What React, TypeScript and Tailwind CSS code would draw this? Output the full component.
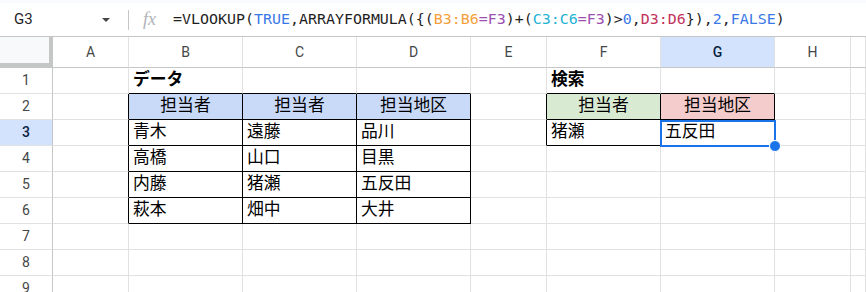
import React from 'react';

type Cell = { text: string; bold?: boolean; bg?: string; center?: boolean };

const COLS = ['A', 'B', 'C', 'D', 'E', 'F', 'G', 'H', ''];
const ROWS = [1, 2, 3, 4, 5, 6, 7, 8, 9];

const head = 'bg-[#c9daf8]';

const data: Record<string, Cell> = {
  B1: { text: 'データ', bold: true },
  B2: { text: '担当者', bg: head, center: true },
  C2: { text: '担当者', bg: head, center: true },
  D2: { text: '担当地区', bg: head, center: true },
  B3: { text: '青木' },
  C3: { text: '遠藤' },
  D3: { text: '品川' },
  B4: { text: '高橋' },
  C4: { text: '山口' },
  D4: { text: '目黒' },
  B5: { text: '内藤' },
  C5: { text: '猪瀬' },
  D5: { text: '五反田' },
  B6: { text: '萩本' },
  C6: { text: '畑中' },
  D6: { text: '大井' },
  F1: { text: '検索', bold: true },
  F2: { text: '担当者', bg: 'bg-[#d9ead3]', center: true },
  G2: { text: '担当地区', bg: 'bg-[#f4cccc]', center: true },
  F3: { text: '猪瀬' },
  G3: { text: '五反田' },
};

// black edges of the two bordered tables
const rightBlack = (c: string, r: number) =>
  (r >= 2 && r <= 6 && 'ABCD'.includes(c) && c !== '') ||
  (r >= 2 && r <= 3 && 'EFG'.includes(c) && c !== '');
const bottomBlack = (c: string, r: number) =>
  (r >= 1 && r <= 6 && 'BCD'.includes(c) && c !== '') ||
  (r >= 1 && r <= 3 && 'FG'.includes(c) && c !== '');

const Formula = () => (
  <span>
    =VLOOKUP(<span className="text-[#3b78e7]">TRUE</span>,ARRAYFORMULA({'{'}(
    <span className="text-[#f5a03a]">B3:B6</span>
    <span className="text-[#9c4fb0]">=F3</span>)+(
    <span className="text-[#1fb3d3]">C3:C6</span>
    <span className="text-[#9c4fb0]">=F3</span>)&gt;
    <span className="text-[#3b78e7]">0</span>,
    <span className="text-[#c2335b]">D3:D6</span>
    {'}'}),<span className="text-[#3b78e7]">2</span>,
    <span className="text-[#3b78e7]">FALSE</span>)
  </span>
);

export default function App() {
  return (
    <div className="w-[866px] h-[292px] overflow-hidden bg-white font-['Roboto','Noto_Sans_CJK_JP',sans-serif]">
      <div className="h-[3px] bg-[#f8fafd]" />
      <div className="h-[34px] flex items-center border-b border-[#c4c7c5] bg-white">
        <div className="w-[128px] flex items-center pl-[14px] pr-[18px] text-[15px] text-[#1f1f1f]">
          <span>G3</span>
          <span className="ml-auto w-0 h-0 border-l-[4px] border-r-[4px] border-t-[4px] border-l-transparent border-r-transparent border-t-[#444746]" />
        </div>
        <div className="h-[20px] border-l border-[#c4c7c5]" />
        <span className="ml-[14px] w-[30px] text-[18px] italic text-[#b0b3b8] font-['Liberation_Serif',serif]">fx</span>
        <div className="text-[14.95px] text-[#1f1f1f] whitespace-nowrap font-['DejaVu_Sans_Mono',monospace]">
          <Formula />
        </div>
      </div>

      <div className="relative">
        <div className="grid grid-cols-[53px_76px_114px_114px_114px_76px_114px_114px_76px_1fr] grid-rows-[31px_repeat(9,26px)]">
          <div className="bg-[#f8f9fa] border-r-[4px] border-b-[5px] border-[#c4c7c5]" />
          {COLS.map((c, i) => (
            <div
              key={'h' + i}
              className={
                'flex items-center justify-center text-[14px] border-r border-r-[#e1e1e1] border-b border-b-[#c4c7c5] ' +
                (c === 'G' ? 'bg-[#d3e3fd] text-[#0b1f3f] font-medium' : 'text-[#444746]')
              }
            >
              {c}
            </div>
          ))}
          {ROWS.map((r) => (
            <React.Fragment key={r}>
              <div
                className={
                  'flex items-center justify-center text-[14px] border-r border-r-[#c4c7c5] border-b border-b-[#e1e1e1] ' +
                  (r === 3 ? 'bg-[#d3e3fd] text-[#0b1f3f] font-medium' : 'text-[#444746]')
                }
              >
                {r}
              </div>
              {COLS.map((c, i) => {
                const cell = data[c + r];
                return (
                  <div
                    key={c + r + i}
                    className={
                      'flex items-center px-[4px] text-[16.8px] text-black leading-none whitespace-nowrap border-r border-b font-["Liberation_Sans","Noto_Sans_CJK_JP",sans-serif] ' +
                      (rightBlack(c, r) ? 'border-r-black ' : 'border-r-[#e1e1e1] ') +
                      (bottomBlack(c, r) ? 'border-b-black ' : 'border-b-[#e1e1e1] ') +
                      (cell?.bg ?? 'bg-white') +
                      (cell?.center ? ' justify-center' : '') +
                      (cell?.bold ? ' font-bold' : '')
                    }
                  >
                    {cell?.text}
                  </div>
                );
              })}
            </React.Fragment>
          ))}
        </div>
        <div className="absolute left-[660px] top-[83px] w-[116px] h-[27px] border-2 border-[#1a73e8]">
          <div className="absolute -right-[7px] -bottom-[7px] w-[12px] h-[12px] rounded-full bg-[#1a73e8] border border-white" />
        </div>
      </div>
    </div>
  );
}
